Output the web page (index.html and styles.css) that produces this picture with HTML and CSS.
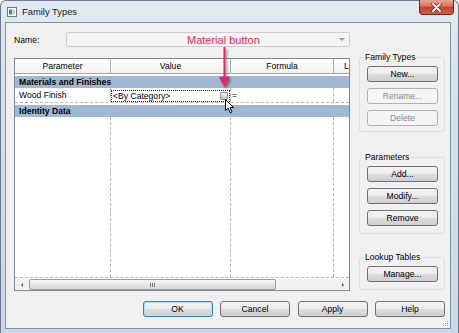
FILE: index.html
```html
<!DOCTYPE html>
<html>
<head>
    <title>Family Types</title>
    <link rel="stylesheet" href="styles.css">
</head>
<body>
    <div class="window">
        <div class="titlebar">
            <svg class="app-icon" width="10" height="10" viewBox="0 0 10 10">
                <rect x="0.5" y="0.5" width="9" height="9" fill="#fdfdfd" stroke="#6c7886"/>
                <rect x="2" y="2.5" width="3" height="5" fill="#3e8f7a"/>
                <rect x="5" y="2.5" width="3" height="5" fill="#c9d3dc"/>
            </svg>
            <span class="title">Family Types</span>
            <div class="close-btn">
                <svg width="11" height="9" viewBox="0 0 11 9">
                    <path d="M2 1 L9 8 M9 1 L2 8" stroke="#5a2318" stroke-width="3.2" stroke-linecap="round"/>
                    <path d="M2 1 L9 8 M9 1 L2 8" stroke="#ffffff" stroke-width="1.8" stroke-linecap="round"/>
                </svg>
            </div>
        </div>

        <div class="client">
            <div class="name-row">
                <span class="name-label">Name:</span>
                <div class="combo"><span class="combo-arrow"></span></div>
            </div>

            <div class="main">
                <div class="grid">
                    <div class="grid-row grid-header">
                        <div class="cell">Parameter</div>
                        <div class="cell">Value</div>
                        <div class="cell">Formula</div>
                        <div class="cell cell-last">L</div>
                    </div>
                    <div class="group-row">Materials and Finishes</div>
                    <div class="grid-row param-row">
                        <div class="cell">Wood Finish</div>
                        <div class="cell value-cell">
                            <div class="value-edit">
                                <span>&lt;By Category&gt;</span>
                                <span class="mat-btn"></span>
                            </div>
                        </div>
                        <div class="cell formula-cell">=</div>
                        <div class="cell cell-last"></div>
                    </div>
                    <div class="group-row">Identity Data</div>
                    <div class="grid-row filler">
                        <div class="cell"></div>
                        <div class="cell"></div>
                        <div class="cell"></div>
                        <div class="cell cell-last"></div>
                    </div>
                    <div class="hscroll">
                        <div class="scroll-arrow"><span class="tri-left"></span></div>
                        <div class="scroll-thumb"><span class="grip"></span></div>
                        <div class="scroll-track"></div>
                        <div class="scroll-arrow"><span class="tri-right"></span></div>
                    </div>
                </div>

                <div class="side">
                    <fieldset class="group g-types">
                        <legend>Family Types</legend>
                        <button class="btn">New...</button>
                        <button class="btn" disabled>Rename...</button>
                        <button class="btn" disabled>Delete</button>
                    </fieldset>
                    <fieldset class="group g-params">
                        <legend>Parameters</legend>
                        <button class="btn">Add...</button>
                        <button class="btn">Modify...</button>
                        <button class="btn">Remove</button>
                    </fieldset>
                    <fieldset class="group g-lookup">
                        <legend>Lookup Tables</legend>
                        <button class="btn">Manage...</button>
                    </fieldset>
                </div>
            </div>

            <div class="footer">
                <button class="btn btn-default">OK</button>
                <button class="btn">Cancel</button>
                <button class="btn">Apply</button>
                <button class="btn">Help</button>
            </div>

            <svg class="size-grip" width="6" height="6" viewBox="0 0 6 6">
                <rect x="4" y="0" width="1" height="1" fill="#a0a0a0"/>
                <rect x="2" y="2" width="1" height="1" fill="#a0a0a0"/>
                <rect x="4" y="2" width="1" height="1" fill="#a0a0a0"/>
                <rect x="0" y="4" width="1" height="1" fill="#a0a0a0"/>
                <rect x="2" y="4" width="1" height="1" fill="#a0a0a0"/>
                <rect x="4" y="4" width="1" height="1" fill="#a0a0a0"/>
            </svg>
        </div>
    </div>

    <!-- annotation drawn over the dialog -->
    <div class="callout">Material button</div>
    <svg class="callout-arrow" width="20" height="50" viewBox="0 0 20 50">
        <defs>
            <filter id="shadow" x="-50%" y="-20%" width="200%" height="150%">
                <feDropShadow dx="1.5" dy="2" stdDeviation="1" flood-color="#000" flood-opacity="0.45"/>
            </filter>
        </defs>
        <g filter="url(#shadow)">
            <rect x="7.5" y="3" width="2" height="31" fill="#ea2460"/>
            <polygon points="3,32.7 14,32.7 8.5,43" fill="#ea2460"/>
        </g>
    </svg>
    <svg class="cursor" width="12" height="16" viewBox="0 0 12 16">
        <path d="M0.5 0.5 L0.5 11.5 L3.2 9.2 L5.2 13.8 L7 13 L5 8.6 L8.6 8.6 Z" fill="#fff" stroke="#000" stroke-width="1" stroke-linejoin="round"/>
    </svg>
</body>
</html>
```

FILE: styles.css
```css
* {
    box-sizing: border-box;
}
body {
    margin: 0;
    font-family: "Liberation Sans", Arial, sans-serif;
    font-size: 8.6px;
    color: #000;
    background: #fff;
}
.window {
    width: 459px;
    height: 333px;
    display: flex;
    flex-direction: column;
    padding: 0 7px 4px 4px;
    border: 1px solid #6a7a8c;
    border-bottom: none;
    border-radius: 6px 6px 0 0;
    background: linear-gradient(180deg, #e2eaf3 0%, #d6e1ec 25%, #cbd8e6 100%);
}
.titlebar {
    height: 21px;
    flex-shrink: 0;
    display: flex;
    align-items: center;
    margin: 0 -7px 0 -4px;
    padding-left: 6px;
    position: relative;
}
.app-icon {
    display: block;
}
.title {
    margin-left: 5px;
    font-size: 9.4px;
    color: #1b1b1b;
}
.close-btn {
    position: absolute;
    right: 4px;
    top: -1px;
    width: 35px;
    height: 15px;
    display: flex;
    align-items: center;
    justify-content: center;
    border: 1px solid #6b2a1e;
    border-top: none;
    border-radius: 0 0 4px 4px;
    background: linear-gradient(180deg, #e9a897 0%, #d9735c 45%, #c5432b 50%, #cf5e46 100%);
}
.client {
    position: relative;
    height: 307px;
    flex-shrink: 0;
    display: flex;
    flex-direction: column;
    padding: 9px 5px 0 8px;
    border: 1px solid #8193a6;
    background: #f0f0f0;
}
.name-row {
    display: flex;
    align-items: center;
    height: 15px;
}
.name-label {
    width: 52px;
}
.combo {
    position: relative;
    width: 284px;
    height: 15px;
    border: 1px solid #cfcfcf;
    border-radius: 2px;
    background: #f4f4f4;
}
.combo-arrow {
    position: absolute;
    right: 4px;
    top: 5px;
    border-left: 3px solid transparent;
    border-right: 3px solid transparent;
    border-top: 3px solid #9a9a9a;
}
.main {
    display: flex;
    gap: 9px;
    margin-top: 5px;
}
.grid {
    width: 336px;
    height: 233px;
    margin-top: 6px;
    display: flex;
    flex-direction: column;
    border: 1px solid #838790;
    background: #fff;
    overflow: hidden;
}
.grid-row {
    display: grid;
    grid-template-columns: 96px 120px 103px 1fr;
}
.cell {
    border-right: 1px dashed #b5b5b5;
    white-space: nowrap;
    overflow: hidden;
}
.cell-last {
    border-right: none;
}
.grid-header {
    height: 15px;
    border-bottom: 1px solid #a3a3a3;
    background: linear-gradient(180deg, #ffffff, #f2f2f2);
}
.grid-header .cell {
    border-right: 1px solid #b0b0b0;
    text-align: center;
    line-height: 14px;
}
.grid-header .cell-last {
    border-right: none;
    text-align: left;
    padding-left: 10px;
}
.group-row {
    height: 12px;
    margin-top: 2px;
    padding-left: 4px;
    line-height: 12px;
    font-weight: bold;
    background: #a0b8d3;
}
.param-row {
    height: 15px;
    border-bottom: 1px dashed #b5b5b5;
}
.param-row .cell:first-child {
    padding-left: 4px;
    line-height: 14px;
}
.value-cell {
    padding-top: 2px;
}
.value-edit {
    display: flex;
    align-items: center;
    justify-content: space-between;
    height: 12px;
    padding: 0 1px 0 1px;
    border: 1px dotted #222;
    background: #fff;
}
.mat-btn {
    width: 8px;
    height: 8px;
    border: 1px solid #8c8c8c;
    border-radius: 1px;
    background: linear-gradient(180deg, #f0f0f0 0%, #d8d8d8 55%, #bdbdbd 100%);
}
.formula-cell {
    padding-left: 1px;
    line-height: 14px;
}
.filler {
    flex: 1;
    border-bottom: 1px dashed #b5b5b5;
}
.hscroll {
    display: flex;
    height: 11px;
    margin-top: 1px;
    background: #f1f1f1;
}
.scroll-arrow {
    width: 13px;
    display: flex;
    align-items: center;
    justify-content: center;
}
.tri-left {
    border-top: 2px solid transparent;
    border-bottom: 2px solid transparent;
    border-right: 2px solid #555;
}
.tri-right {
    border-top: 2px solid transparent;
    border-bottom: 2px solid transparent;
    border-left: 2px solid #555;
}
.scroll-thumb {
    width: 247px;
    margin-left: 1px;
    display: flex;
    align-items: center;
    justify-content: center;
    border: 1px solid #9b9b9b;
    border-radius: 2px;
    background: linear-gradient(180deg, #f6f6f6 0%, #e6e6e6 50%, #d6d6d6 100%);
}
.grip {
    width: 5px;
    height: 4px;
    background: repeating-linear-gradient(90deg, #7c7c7c 0 1px, transparent 1px 2px);
}
.scroll-track {
    flex: 1;
}
.side {
    width: 86px;
    display: flex;
    flex-direction: column;
}
.group {
    margin: 0;
    padding: 3px 6px 5px 7px;
    border: 1px solid #d5dfe5;
    border-radius: 3px;
    display: flex;
    flex-direction: column;
    gap: 6px;
}
.group legend {
    padding: 0 1px;
    margin-left: -3px;
    line-height: 11px;
}
.g-params {
    margin-top: 20px;
    padding-bottom: 7px;
}
.g-lookup {
    margin-top: 18px;
    padding-bottom: 7px;
}
.btn {
    height: 16px;
    padding: 0;
    font-family: "Liberation Sans", Arial, sans-serif;
    font-size: 8.6px;
    color: #000;
    border: 1px solid #707070;
    border-radius: 3px;
    background: linear-gradient(180deg, #f2f2f2 0%, #ebebeb 50%, #dddddd 50%, #cfcfcf 100%);
}
.btn:disabled {
    color: #8a8a8a;
    border-color: #adb2b5;
    background: #f4f4f4;
}
.footer {
    display: flex;
    justify-content: flex-end;
    gap: 7.5px;
    margin-top: 10px;
}
.footer .btn {
    width: 70px;
}
.btn-default {
    border-color: #3c7fb1;
    box-shadow: inset 0 0 0 1px #a6e3f8;
}
.size-grip {
    position: absolute;
    right: 1px;
    bottom: 1px;
}
.callout {
    position: absolute;
    left: 187px;
    top: 33px;
    font-size: 11px;
    line-height: 14px;
    color: #f0245a;
}
.callout-arrow {
    position: absolute;
    left: 216px;
    top: 44px;
}
.cursor {
    position: absolute;
    left: 225px;
    top: 99px;
}
```
